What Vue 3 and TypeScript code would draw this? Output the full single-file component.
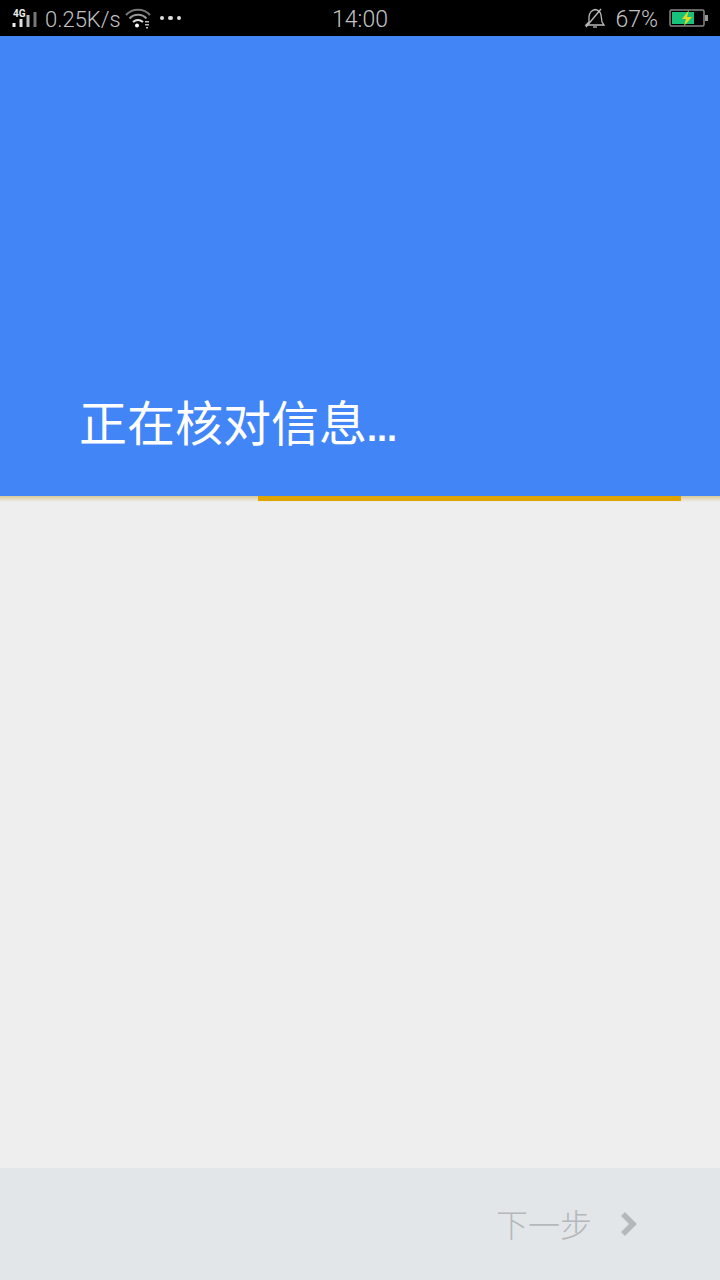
<script setup lang="ts">
const title: string = '正在核对信息'
const ellipsis: string = '...'
</script>

<template>
  <div class="page">
    <div class="status">
      <div class="left">
        <svg class="signal" width="28" height="24" viewBox="0 0 28 24">
          <text x="2" y="9" class="g4">4G</text>
          <rect x="1.500" y="15" width="3" height="4" fill="#eee" />
          <rect x="8.500" y="11" width="3" height="8" fill="#ddd" />
          <rect x="15.500" y="7" width="3" height="12" fill="#bbb" />
          <rect x="22.500" y="4" width="3" height="15" fill="#777" />
        </svg>
        <span class="speed">0.25K/s</span>
        <svg class="wifi" width="26" height="22" viewBox="0 0 26 22" fill="none">
          <path d="M1 8 C7 1 19 1 25 8" stroke="#777" stroke-width="2" />
          <path d="M4.500 11.500 C9 6.500 17 6.500 21.500 11.500" stroke="#999" stroke-width="2" />
          <path d="M8 15 C11 12.500 15 12.500 18 15" stroke="#ddd" stroke-width="2" />
          <circle cx="12" cy="18.500" r="2" fill="#fff" />
          <rect x="20" y="14" width="4" height="1.500" fill="#bbb" />
          <rect x="20" y="17" width="4" height="1.500" fill="#bbb" />
          <rect x="21" y="20" width="2" height="1.500" fill="#bbb" />
        </svg>
        <div class="dots"><i></i><i></i><i></i></div>
      </div>
      <span class="clock">14:00</span>
      <div class="right">
        <svg class="bell" width="22" height="22" viewBox="0 0 22 22" fill="none" stroke="#bbb" stroke-width="1.300">
          <path d="M2 18 L5 15 V10 C5 6 8 3 11 2.500 C14 3 16.500 5 17 8 L18 15 L20 18 Z" />
          <path d="M2 20 L17 2" />
          <path d="M9 20 H13" />
        </svg>
        <span class="pct">67%</span>
        <svg class="battery" width="40" height="18" viewBox="0 0 40 18">
          <rect x="1" y="1" width="34" height="16" rx="1.500" fill="none" stroke="#888" stroke-width="1.500" />
          <rect x="3" y="3" width="22" height="12" fill="#17c37b" />
          <rect x="36" y="6" width="3" height="6" fill="#999" />
          <path d="M20 1 L13 10 H17 L15 17 L23 8 H18 Z" fill="#e6d91c" />
        </svg>
      </div>
    </div>

    <header class="hero">
      <h1 class="title">{{ title }}<span class="ell">{{ ellipsis }}</span></h1>
    </header>

    <div class="track"><div class="bar"></div></div>

    <main class="body"></main>

    <footer class="foot">
      <span class="next">下一步</span>
      <svg class="chev" width="18" height="26" viewBox="0 0 18 26" fill="none">
        <path d="M3 3 L13 13 L3 23" stroke="#b4b8bb" stroke-width="5.500" />
      </svg>
    </footer>
  </div>
</template>

<style>
html, body { margin: 0; background: #eeeeee; }
</style>

<style scoped>
.page {
  width: 720px;
  height: 1280px;
  display: flex;
  flex-direction: column;
  overflow: hidden;
  font-family: "Noto Sans CJK SC", "Noto Sans", sans-serif;
  background: #eeeeee;
}
.status {
  height: 36px;
  background: #000;
  position: relative;
  display: flex;
  align-items: center;
  justify-content: space-between;
  color: #c4c4c4;
  font-family: "Roboto", "Noto Sans", sans-serif;
  font-weight: 300;
  font-size: 22px;
  flex: none;
}
.left, .right { display: flex; align-items: center; }
.left { padding-left: 11px; }
.right { padding-right: 11px; }
.signal { margin-right: 6px; margin-top: 4px; }
.g4 { font-size: 10px; font-weight: 700; fill: #eee; font-family: "Roboto", sans-serif; }
.speed { line-height: 36px; margin-top: 4px; }
.wifi { margin-left: 4px; }
.dots { display: flex; gap: 4px; margin-left: 9px; }
.dots i { width: 4.500px; height: 4.500px; border-radius: 50%; background: #ddd; display: block; }
.clock {
  position: absolute;
  top: 0;
  left: 0;
  right: 0;
  text-align: center;
  font-size: 23px;
  line-height: 39px;
}
.bell { margin-right: 9px; }
.pct { font-size: 23px; line-height: 36px; margin-top: 3px; margin-right: 11px; }
.hero {
  height: 460px;
  background: #4285f6;
  display: flex;
  align-items: flex-end;
  padding-left: 79px;
  box-sizing: border-box;
  flex: none;
}
.title {
  margin: 0 0 39px;
  color: #fff;
  font-size: 48px;
  font-weight: 400;
  line-height: 56px;
}
.ell {
  font-family: "Liberation Sans", sans-serif;
  font-size: 36px;
  font-weight: 700;
}
.track {
  height: 6px;
  background: linear-gradient(#d8cb9a, #eeeeee);
  padding-left: 258px;
  padding-right: 39px;
  flex: none;
}
.bar { height: 5px; background: #e0a400; }
.body { flex: 1; background: #eeeeee; }
.foot {
  height: 112px;
  background: #e2e6e9;
  display: flex;
  align-items: center;
  justify-content: flex-end;
  padding-right: 82px;
  flex: none;
}
.next {
  color: #b4b8bb;
  font-size: 32px;
  font-weight: 300;
  line-height: 40px;
  margin-right: 28px;
  margin-bottom: 2px;
}
</style>
